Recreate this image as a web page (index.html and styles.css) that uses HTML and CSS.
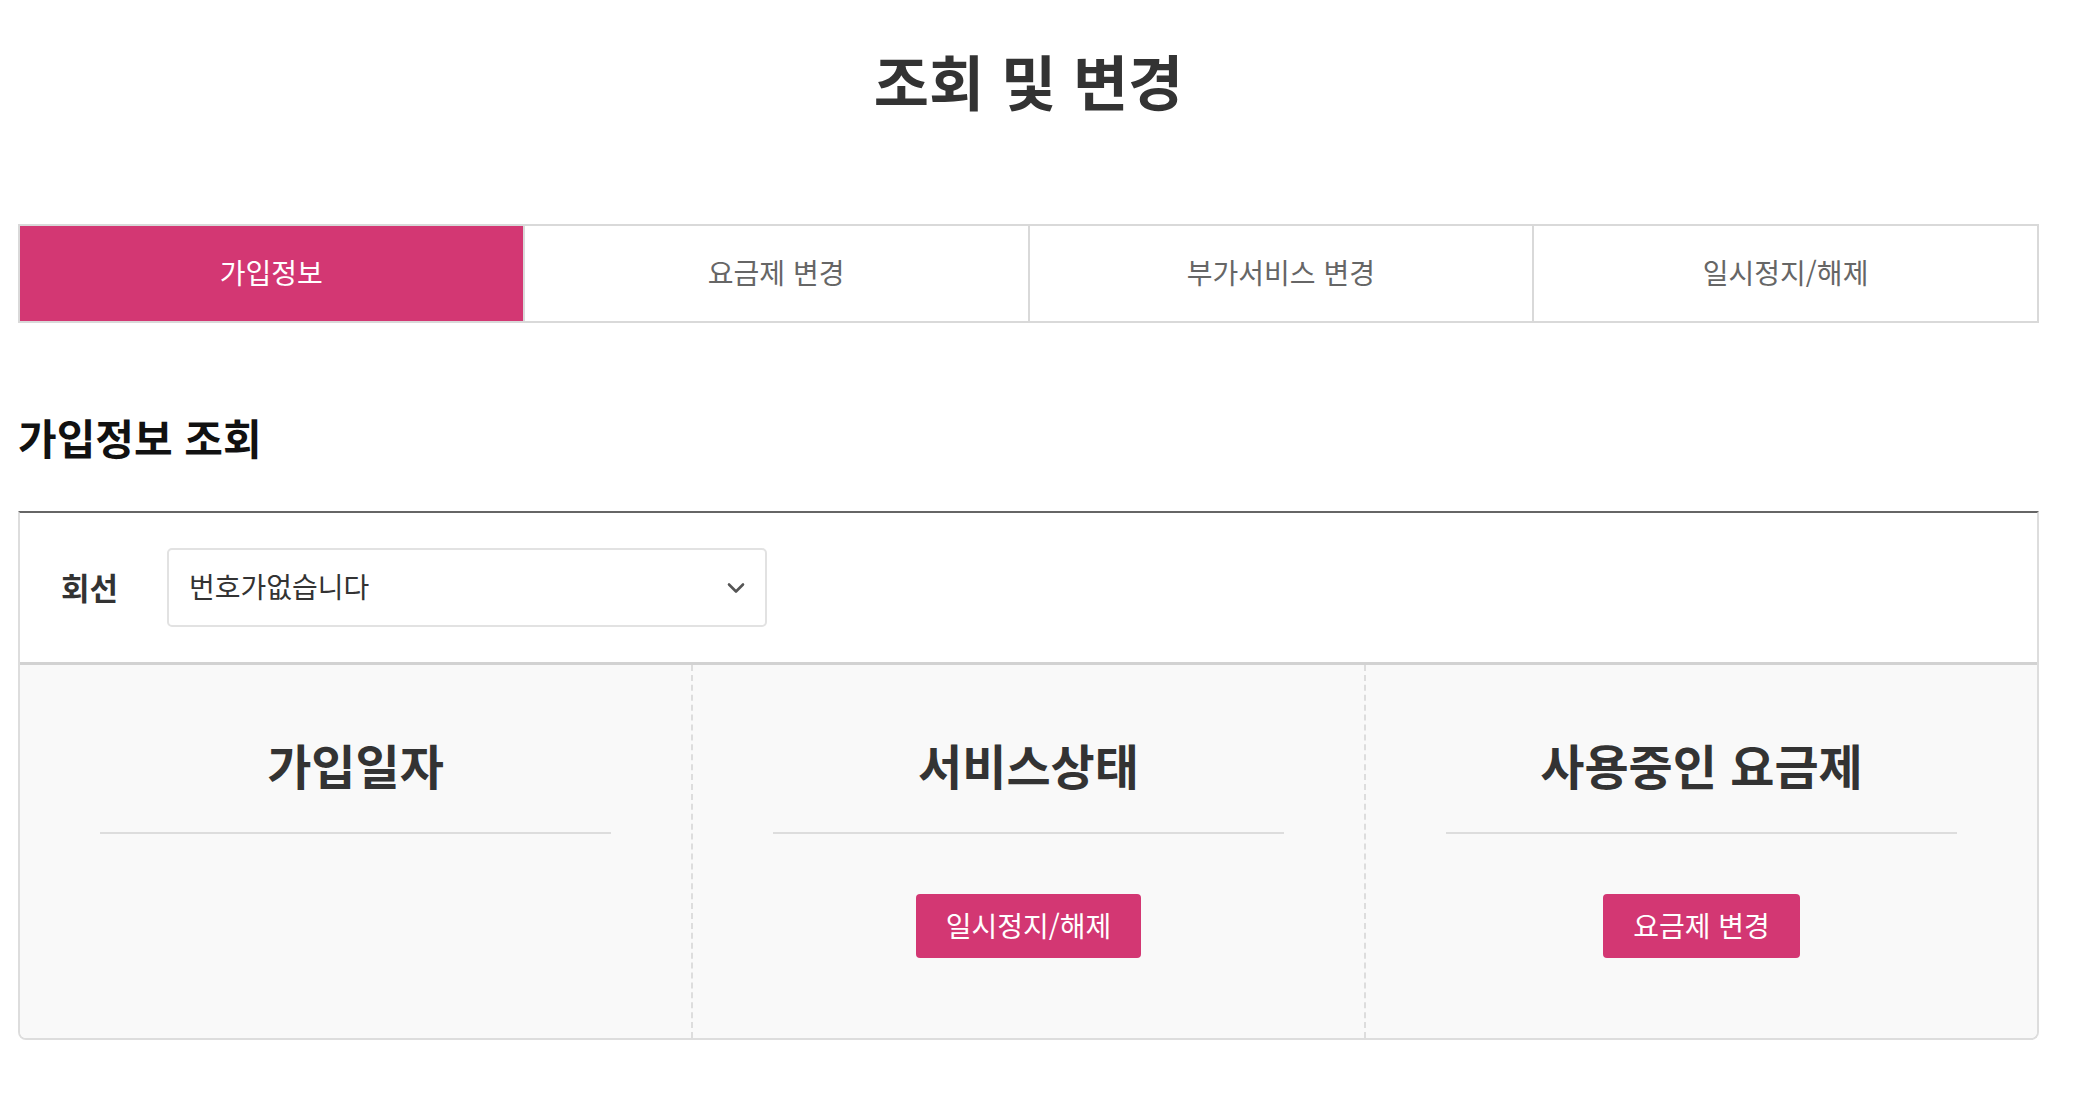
FILE: index.html
```html
<!DOCTYPE html>
<html lang="ko">
<head>
<meta charset="utf-8">
<title>조회 및 변경</title>
<link rel="stylesheet" href="styles.css">
</head>
<body>
<div class="page">
  <h1 class="page-title">조회 및 변경</h1>

  <ul class="tabs">
    <li class="tab active">가입정보</li>
    <li class="tab">요금제 변경</li>
    <li class="tab">부가서비스 변경</li>
    <li class="tab">일시정지/해제</li>
  </ul>

  <h2 class="section-title">가입정보 조회</h2>

  <div class="info-box">
    <div class="line-row">
      <span class="line-label">회선</span>
      <div class="select">
        <span class="select-value">번호가없습니다</span>
        <svg class="chevron" width="18" height="12" viewBox="0 0 18 12"><path d="M2 2.5 L9 9.5 L16 2.5" fill="none" stroke="#555" stroke-width="2.6" stroke-linecap="round" stroke-linejoin="round"/></svg>
      </div>
    </div>
    <div class="info-cols">
      <div class="info-col">
        <div class="col-title">가입일자</div>
        <div class="col-body"></div>
      </div>
      <div class="info-col">
        <div class="col-title">서비스상태</div>
        <div class="col-body"><button class="pink-btn">일시정지/해제</button></div>
      </div>
      <div class="info-col">
        <div class="col-title">사용중인 요금제</div>
        <div class="col-body"><button class="pink-btn">요금제 변경</button></div>
      </div>
    </div>
  </div>
</div>
</body>
</html>
```

FILE: styles.css
```css
* { box-sizing: border-box; }
html, body { margin: 0; padding: 0; background: #fff; }
body {
  font-family: "Noto Sans CJK KR", "Noto Sans", sans-serif;
  color: #333;
}
.page {
  width: 2021px;
  margin-left: 18px;
  padding-top: 38px;
}
.page-title {
  margin: 0;
  text-align: center;
  font-size: 60px;
  line-height: 84px;
  font-weight: 700;
  color: #333;
}
.tabs {
  list-style: none;
  margin: 102px 0 0;
  padding: 0;
  display: flex;
  border: 2px solid #d9d9d9;
  height: 99px;
}
.tab {
  flex: 1;
  display: flex;
  align-items: center;
  justify-content: center;
  font-size: 28px;
  color: #666;
  border-left: 2px solid #d9d9d9;
  padding-bottom: 3px;
}
.tab:first-child { border-left: none; }
.tab.active {
  background: #d33773;
  color: #fff;
}
.section-title {
  margin: 86px 0 0;
  font-size: 42px;
  line-height: 55px;
  font-weight: 700;
  color: #111;
}
.info-box {
  margin-top: 47px;
  border: 2px solid #ddd;
  border-top: 2px solid #666;
  border-radius: 0 0 8px 8px;
  overflow: hidden;
}
.line-row {
  display: flex;
  align-items: center;
  padding: 35px 40px 35px 41px;
  background: #fff;
  border-bottom: 3px solid #d2d2d2;
}
.line-label {
  font-size: 31px;
  font-weight: 700;
  color: #333;
  width: 106px;
  padding-bottom: 2px;
}
.select {
  width: 600px;
  height: 79px;
  border: 2px solid #e2e2e2;
  border-radius: 5px;
  display: flex;
  align-items: center;
  justify-content: space-between;
  padding: 0 20px 0 20px;
  background: #fff;
}
.select-value {
  font-size: 28px;
  color: #333;
  padding-bottom: 3px;
}
.info-cols {
  display: flex;
  background: #f9f9f9;
}
.info-col {
  flex: 1;
  padding: 66px 80px 80px;
  border-left: 2px dashed #ddd;
  text-align: center;
}
.info-col:first-child { border-left: none; }
.col-title {
  font-size: 48px;
  line-height: 66px;
  font-weight: 700;
  color: #333;
  padding-bottom: 35px;
  border-bottom: 2px solid #ddd;
}
.col-body {
  height: 124px;
  padding-top: 60px;
  display: flex;
  justify-content: center;
  align-items: flex-start;
}
.pink-btn {
  height: 64px;
  padding: 0 30px 3px;
  border: none;
  border-radius: 4px;
  background: #d33773;
  color: #fff;
  font-family: "Noto Sans CJK KR", "Noto Sans", sans-serif;
  font-size: 28px;
  cursor: pointer;
}
```
